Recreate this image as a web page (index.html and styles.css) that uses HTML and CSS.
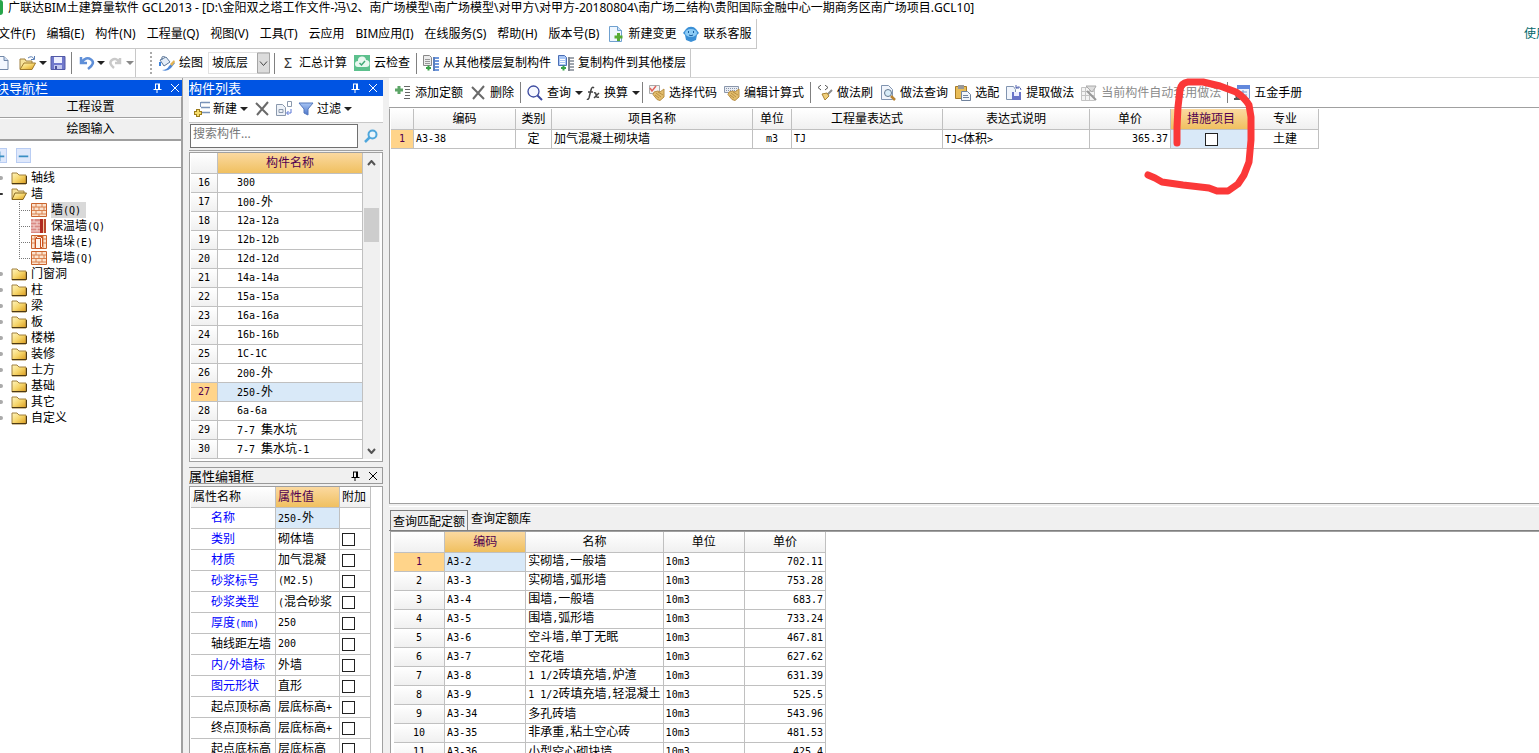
FILE: index.html
```html
<!DOCTYPE html>
<html lang="zh-CN">
<head>
<meta charset="utf-8">
<title>广联达BIM土建算量软件 GCL2013</title>
<link rel="stylesheet" href="styles.css">
</head>
<body>
<svg class="defs" aria-hidden="true">
  <defs>
    <linearGradient id="gold" x1="0" y1="0" x2="1" y2="1"><stop offset="0" stop-color="#fff6c0"/><stop offset=".5" stop-color="#f6d56a"/><stop offset="1" stop-color="#d99a1c"/></linearGradient>
    <linearGradient id="blue" x1="0" y1="0" x2="0" y2="1"><stop offset="0" stop-color="#a9c6f5"/><stop offset="1" stop-color="#4a74c9"/></linearGradient>
    <symbol id="folder" viewBox="0 0 16 14"><path d="M1 2h5l2 2h7v9H1z" fill="url(#gold)" stroke="#a08040"/><path d="M1 12.500h14.500V5" fill="none" stroke="#4d3a14"/></symbol>
    <symbol id="folder-open" viewBox="0 0 16 14"><path d="M1 12V2h5l1 2h6v2" fill="#f7e29a" stroke="#a08040"/><path d="M1 12.500L4 6h11.500L12 12.500z" fill="url(#gold)" stroke="#86661f"/></symbol>
    <symbol id="brick" viewBox="0 0 16 14"><path d="M.5.500h15v13H.5z" fill="#fbe3cf" stroke="#c9642e"/><path d="M1 4h14M1 7.500h14M1 11h14M5 1v3M11 1v3M3 4v3M8 4v3M13 4v3M5 7.500V11M11 7.500V11M8 11v2.500" stroke="#d9814e" fill="none"/></symbol>
    <symbol id="brick-red" viewBox="0 0 16 14"><path d="M0 0h9v14H0z" fill="#d98a84"/><path d="M0 3h9M0 6h9M0 9h9M0 12h9M3 0v3M6 3v3M3 6v3M6 9v3" stroke="#f5d6d2"/><path d="M9 0h3v14H9z" fill="#b02a20"/><path d="M12.500 0v14" stroke="#f4c8a0"/><path d="M13 0h2v14h-2z" fill="#b9462b"/></symbol>
    <symbol id="brick-pier" viewBox="0 0 16 14"><path d="M.5.500h15v13H.5z" fill="#fbe3cf" stroke="#c9642e"/><path d="M1 4h14M1 8h14M4 1v12M12 1v12" stroke="#d9814e"/><path d="M4.500 3.500l2-2h5v10l-2 2h-5zM9.500 3.500v10M4.500 3.500h5l2-2" fill="#fff4ea" stroke="#c9501e"/></symbol>
    <symbol id="pin" viewBox="0 0 10 10"><path d="M3 1h5M3.500 1v5M6.500 1v5M7.500 1v5M1.500 6.500h8M5 7v3" fill="none" stroke="currentColor"/></symbol>
    <symbol id="close" viewBox="0 0 10 10"><path d="M1 1l8 8M9 1l-8 8" fill="none" stroke="currentColor"/></symbol>
    <symbol id="cross" viewBox="0 0 16 16"><path d="M2 2l12 12M14 1L3 14" stroke="#6a6a6a" stroke-width="2" fill="none"/></symbol>
    <symbol id="doc" viewBox="0 0 16 16"><path d="M2 1.500h8l4 4v9H2z" fill="#f4f8ff" stroke="#7388a8"/><path d="M10 1.500v4h4" fill="#cddcf2" stroke="#7388a8"/></symbol>
    <symbol id="copy" viewBox="0 0 16 16"><path d="M.5.500h6l2 2v8h-8z" fill="#ececec" stroke="#888"/><path d="M2 4.500h5M2 6.500h5M2 8.500h5" stroke="#999"/><path d="M12 3h4M12 6h4M12 9h4M12 12h4M12 15h4" stroke="#6f98dc" stroke-width="2"/><path d="M11 2v14" stroke="#5b7fbd" stroke-width="2"/><path d="M5.500 10.500v5M3 13h5" stroke="#39a348" stroke-width="2"/></symbol>
    <symbol id="copy2" viewBox="0 0 16 16"><path d="M.5.500h6l2 2v8h-8z" fill="#a9c6f5" stroke="#4a6eb5"/><path d="M2 4.500h5M2 6.500h5M2 8.500h5" stroke="#fff"/><path d="M12 3h4M12 6h4M12 9h4M12 12h4M12 15h4" stroke="#a0a6ae" stroke-width="2"/><path d="M11 2v14" stroke="#7f868f" stroke-width="2"/><path d="M5.500 10.500v5M3 13h5" stroke="#39a348" stroke-width="2"/></symbol>
    <symbol id="hand" viewBox="0 0 16 16"><path d="M5 7l4-1 2 1 4-3v8l-4 3.500-3-1-4-5z" fill="#e2bd6c" stroke="#b98f45"/><path d="M7 8l5 4M9 7l5 3M6 10l4 3" stroke="#a87b31" stroke-width=".7"/></symbol>
  </defs>
</svg>

<header class="titlebar">
  <span class="app-mark"></span>
  <h1>广联达BIM土建算量软件 GCL2013 - [D:\金阳双之塔工作文件-冯\2、南广场模型\南广场模型\对甲方\对甲方-20180804\南广场二结构\贵阳国际金融中心一期商务区南广场项目.GCL10]</h1>
</header>

<div class="menu-row">
  <nav class="menubar">
    <button>文件(F)</button><button>编辑(E)</button><button>构件(N)</button><button>工程量(Q)</button><button>视图(V)</button><button>工具(T)</button><button>云应用</button><button>BIM应用(I)</button><button>在线服务(S)</button><button>帮助(H)</button><button>版本号(B)</button>
    <button><svg class="ic" viewBox="0 0 16 16"><path d="M1.500.500h8l4 4v11h-12z" fill="#eef6ff" stroke="#6fa0cf"/><path d="M9.500.500v4h4" fill="#c9def4" stroke="#6fa0cf"/><path d="M10.500 7v8M6.500 11h8" stroke="#55ab35" stroke-width="3"/></svg>新建变更</button>
    <button><svg class="ic" viewBox="0 0 16 16"><path d="M3 3a6 5 0 0 1 10 0l3 4-2 2-1 5-5 2-5-2-1-5-2-2z" fill="#3a8fd6"/><ellipse cx="8" cy="7" rx="6" ry="4" fill="#8ccbf5"/><path d="M5.500 5v2M10.500 5v2M6 9q2 1.500 4 0" stroke="#165c9d" fill="none"/></svg>联系客服</button>
  </nav>
  <a class="help-link" href="#">使用</a>
</div>

<div class="toolbars">
  <div class="bar bar-file">
    <button class="clip" aria-label="新建"><svg class="ic"><use href="#doc"/></svg></button>
    <button aria-label="打开"><svg class="ic wide" viewBox="0 0 18 16"><path d="M1 14V4h5l1 2h6v2" fill="#f7e29a" stroke="#a08040"/><path d="M1 14.500L5 8h11.500L13 14.500z" fill="url(#gold)" stroke="#a07a2c"/><path d="M9 3q4-3 6 1M15.500 1v3.500H12" fill="none" stroke="#5c7fb4"/></svg><i class="caret"></i></button>
    <button aria-label="保存"><svg class="ic" viewBox="0 0 16 16"><path d="M1 1.500h14v13H1z" fill="#7078cc" stroke="#5259a5"/><path d="M4 2h8v6H4z" fill="#eef0ff"/><path d="M4 10h8v4H4z" fill="#c3c8ee"/><path d="M5 11h2v3H5z" fill="#4a4f9b"/></svg></button>
    <span class="sep"></span>
    <button aria-label="撤销"><svg class="ic" viewBox="0 0 16 16"><path d="M2 2v6h6M2.500 7.500Q7 1 12 4.500T9 14" fill="none" stroke="#5f8fd8" stroke-width="2.500"/></svg><i class="caret"></i></button>
    <button aria-label="重做"><svg class="ic" viewBox="0 0 16 16"><path d="M12 3v5H7M11.500 7.500Q8 2 4 5t2 8" fill="none" stroke="#c9c9c9" stroke-width="2.500"/></svg><i class="caret dim"></i></button>
  </div>
  <div class="bar bar-draw">
    <span class="grip"></span>
    <button><svg class="ic" viewBox="0 0 16 16"><path d="M1 5l6-3 4 5-6 4z" fill="#e4edf8" stroke="#5b7699"/><path d="M3 5Q2 0 6 2" fill="none" stroke="#5b7699"/><path d="M1 7v4" stroke="#3b82dd" stroke-width="2"/><path d="M3 15q5 0 7-4l4-4 2 1-4 5q-4 4-9 2z" fill="#4c86d8"/><path d="M11 9l4-4 1 2-3 4z" fill="#e4b453"/></svg>绘图</button>
    <span class="combo"><select aria-label="楼层"><option>坡底层</option></select><svg viewBox="0 0 13 21"><path d="M.5.500h12v20H.5z" fill="#dcdcdc" stroke="#a5a5a5"/><path d="M3 9l3.500 4L10 9" fill="none" stroke="#444"/></svg></span>
    <span class="sep"></span>
    <button><span class="sigma">Σ</span>汇总计算</button>
    <button><svg class="ic" viewBox="0 0 16 16"><path d="M0 0h16v16H0z" fill="#5cc08d"/><path d="M4 12a3 3 0 0 1 0-6 4 4 0 0 1 8-1 3.500 3.500 0 0 1 0 7z" fill="#e9f8f0"/><path d="M5.500 8l2 2 3.500-4" fill="none" stroke="#40a876" stroke-width="1.500"/></svg>云检查</button>
    <span class="sep"></span>
    <button><svg class="ic"><use href="#copy"/></svg>从其他楼层复制构件</button>
    <button><svg class="ic"><use href="#copy2"/></svg>复制构件到其他楼层</button>
  </div>
</div>

<main class="workspace">
  <aside class="nav-panel">
    <div class="cap active"><h2 class="cut">块导航栏</h2><button aria-label="固定"><svg><use href="#pin"/></svg></button><button aria-label="关闭"><svg><use href="#close"/></svg></button></div>
    <button class="stage">工程设置</button>
    <button class="stage">绘图输入</button>
    <div class="tree-tools"><button class="sq plus" aria-label="展开"><svg viewBox="0 0 15 15"><path d="M2 8.500h11M7.500 3v11" stroke="#3a8fc4" stroke-width="2"/></svg></button><button class="sq" aria-label="折叠"><svg viewBox="0 0 15 15"><path d="M2 8.500h11" stroke="#3a8fc4" stroke-width="2"/></svg></button></div>
    <ul class="tree">
      <li><div class="node"><svg><use href="#folder"/></svg>轴线</div></li>
      <li class="opened"><div class="node open"><svg><use href="#folder-open"/></svg>墙</div>
        <ul>
          <li><div class="leaf sel"><svg><use href="#brick"/></svg><span>墙<b class="m">(Q)</b></span></div></li>
          <li><div class="leaf"><svg><use href="#brick-red"/></svg><span>保温墙<b class="m">(Q)</b></span></div></li>
          <li><div class="leaf"><svg><use href="#brick-pier"/></svg><span>墙垛<b class="m">(E)</b></span></div></li>
          <li><div class="leaf"><svg><use href="#brick"/></svg><span>幕墙<b class="m">(Q)</b></span></div></li>
        </ul>
      </li>
      <li><div class="node"><svg><use href="#folder"/></svg>门窗洞</div></li>
      <li><div class="node"><svg><use href="#folder"/></svg>柱</div></li>
      <li><div class="node"><svg><use href="#folder"/></svg>梁</div></li>
      <li><div class="node"><svg><use href="#folder"/></svg>板</div></li>
      <li><div class="node"><svg><use href="#folder"/></svg>楼梯</div></li>
      <li><div class="node"><svg><use href="#folder"/></svg>装修</div></li>
      <li><div class="node"><svg><use href="#folder"/></svg>土方</div></li>
      <li><div class="node"><svg><use href="#folder"/></svg>基础</div></li>
      <li><div class="node"><svg><use href="#folder"/></svg>其它</div></li>
      <li><div class="node"><svg><use href="#folder"/></svg>自定义</div></li>
    </ul>
  </aside>

  <section class="mid">
    <div class="cap active"><h2>构件列表</h2><button aria-label="固定"><svg><use href="#pin"/></svg></button><button aria-label="关闭"><svg><use href="#close"/></svg></button></div>
    <div class="list-tools">
      <button><svg class="ic" viewBox="0 0 16 16"><path d="M7 1.500h9M7 6.500h9M7 11.500h9" stroke="#7a93b8" stroke-width="1.500"/><path d="M6.500 1v5" stroke="#7a93b8"/><path d="M4 8v8M0 12h8" stroke="#9c7c1b" stroke-width="4"/><path d="M4 9v6M1 12h6" stroke="#f6dc6a" stroke-width="2"/></svg>新建<i class="caret"></i></button>
      <button aria-label="删除"><svg class="ic"><use href="#cross"/></svg></button>
      <button aria-label="复制"><svg class="ic" viewBox="0 0 16 16"><path d="M.5 3.500h6l3 3v8h-9z" fill="#eef2f8" stroke="#8b99ad"/><path d="M3 8.500h4v3H3z" fill="none" stroke="#8b99ad"/><path d="M11.500.500h4v5h-4z" fill="#fff" stroke="#8b99ad"/><path d="M15 8v4h-4M12.500 10l-2 2 2 2" fill="none" stroke="#5b76d6"/></svg></button>
      <button><svg class="ic" viewBox="0 0 16 16"><path d="M1 2h14L10 8v6l-4-2V8z" fill="url(#blue)" stroke="#5578bd"/></svg>过滤<i class="caret"></i></button>
    </div>
    <div class="search"><input type="text" placeholder="搜索构件..." aria-label="搜索构件"><button aria-label="搜索"><svg viewBox="0 0 14 14"><circle cx="8.500" cy="5.500" r="4" fill="#eaf6fd" stroke="#4fa7dc" stroke-width="2"/><path d="M5.500 8.500L1 13" stroke="#4fa7dc" stroke-width="2.500"/></svg></button></div>
    <div class="list-box">
      <table class="grid comps">
        <colgroup><col class="c-no"><col></colgroup>
        <thead><tr><th></th><th class="hot">构件名称</th></tr></thead>
        <tbody>
          <tr><th class="m">16</th><td class="m">300</td></tr>
          <tr><th class="m">17</th><td><b class="m">100-</b>外</td></tr>
          <tr><th class="m">18</th><td class="m">12a-12a</td></tr>
          <tr><th class="m">19</th><td class="m">12b-12b</td></tr>
          <tr><th class="m">20</th><td class="m">12d-12d</td></tr>
          <tr><th class="m">21</th><td class="m">14a-14a</td></tr>
          <tr><th class="m">22</th><td class="m">15a-15a</td></tr>
          <tr><th class="m">23</th><td class="m">16a-16a</td></tr>
          <tr><th class="m">24</th><td class="m">16b-16b</td></tr>
          <tr><th class="m">25</th><td class="m">1C-1C</td></tr>
          <tr><th class="m">26</th><td><b class="m">200-</b>外</td></tr>
          <tr><th class="m now">27</th><td class="pick"><b class="m">250-</b>外</td></tr>
          <tr><th class="m">28</th><td class="m">6a-6a</td></tr>
          <tr><th class="m">29</th><td><b class="m">7-7 </b>集水坑</td></tr>
          <tr><th class="m">30</th><td><b class="m">7-7 </b>集水坑<b class="m">-1</b></td></tr>
        </tbody>
      </table>
      <div class="scroll"><svg viewBox="0 0 9 6"><path d="M1 5l3.500-4L8 5" fill="none" stroke="#555" stroke-width="2"/></svg><span class="thumb"></span><svg viewBox="0 0 9 6"><path d="M1 1l3.500 4L8 1" fill="none" stroke="#555" stroke-width="2"/></svg></div>
    </div>
    <div class="cap idle"><h2>属性编辑框</h2><button aria-label="固定"><svg><use href="#pin"/></svg></button><button aria-label="关闭"><svg><use href="#close"/></svg></button></div>
    <div class="prop-box">
      <table class="grid props">
        <colgroup><col class="p-name"><col class="p-val"><col class="p-add"></colgroup>
        <thead><tr><th>属性名称</th><th class="hot">属性值</th><th>附加</th></tr></thead>
        <tbody>
          <tr><td class="key">名称</td><td class="pick"><b class="m">250-</b>外</td><td></td></tr>
          <tr><td class="key">类别</td><td>砌体墙</td><td><input type="checkbox" aria-label="类别"></td></tr>
          <tr><td class="key">材质</td><td>加气混凝</td><td><input type="checkbox" aria-label="材质"></td></tr>
          <tr><td class="key">砂浆标号</td><td class="m">(M2.5)</td><td><input type="checkbox" aria-label="砂浆标号"></td></tr>
          <tr><td class="key">砂浆类型</td><td><b class="m">(</b>混合砂浆</td><td><input type="checkbox" aria-label="砂浆类型"></td></tr>
          <tr><td class="key">厚度<b class="m">(mm)</b></td><td class="m">250</td><td><input type="checkbox" aria-label="厚度"></td></tr>
          <tr><td class="key own">轴线距左墙</td><td class="m">200</td><td><input type="checkbox" aria-label="轴线距左墙"></td></tr>
          <tr><td class="key">内<b class="m">/</b>外墙标</td><td>外墙</td><td><input type="checkbox" aria-label="内外墙标"></td></tr>
          <tr><td class="key">图元形状</td><td>直形</td><td><input type="checkbox" aria-label="图元形状"></td></tr>
          <tr><td class="key own">起点顶标高</td><td>层底标高<b class="m">+</b></td><td><input type="checkbox" aria-label="起点顶标高"></td></tr>
          <tr><td class="key own">终点顶标高</td><td>层底标高<b class="m">+</b></td><td><input type="checkbox" aria-label="终点顶标高"></td></tr>
          <tr><td class="key own">起点底标高</td><td>层底标高</td><td><input type="checkbox" aria-label="起点底标高"></td></tr>
        </tbody>
      </table>
    </div>
  </section>

  <section class="right">
    <div class="work-tools">
      <button><svg class="ic" viewBox="0 0 16 16"><path d="M4 1v8M0 5h8" stroke="#5da567" stroke-width="3"/><path d="M9 1.500h6M10 4.500h5M10 7.500h5M10 10.500h5M9 13.500h6" stroke="#666"/></svg>添加定额</button>
      <button><svg class="ic"><use href="#cross"/></svg>删除</button>
      <span class="sep"></span>
      <button class="drop"><svg class="ic" viewBox="0 0 16 16"><circle cx="6.500" cy="6.500" r="5.500" fill="#f6f8ff" stroke="#3c4aa0" stroke-width="1.300"/><path d="M10.500 10.500l4.500 4.500" stroke="#3c4aa0" stroke-width="2"/></svg>查询<i class="caret"></i></button>
      <button class="drop"><svg class="ic fx" viewBox="0 0 14 16"><path d="M8 3Q6 1 5 5L3 13q-1 2-2 1M2 7h5M8 8q2-1 2 2t3 2M13 8l-5 5" fill="none" stroke="#444" stroke-width="1.500"/></svg>换算<i class="caret"></i></button>
      <span class="sep"></span>
      <button><svg class="ic" viewBox="0 0 16 16"><path d="M.5.500h10v8H.5z" fill="#f4f4f4" stroke="#aaa"/><path d="M1 3l2 3 4-5" fill="none" stroke="#e0645c" stroke-width="1.500"/><use href="#hand"/></svg>选择代码</button>
      <button><svg class="ic" viewBox="0 0 16 16"><path d="M.5 1.500h14v6H.5z" fill="#e9edf4" stroke="#8a96ab"/><path d="M2 3.500h11M2 5.500h11" stroke="#8a96ab" stroke-dasharray="1 1"/><use href="#hand"/></svg>编辑计算式</button>
      <span class="sep"></span>
      <button><svg class="ic" viewBox="0 0 16 16"><path d="M4 0L1 2.500 4 5M8 0l3 2.500L8 5" fill="none" stroke="#555"/><path d="M15 5l-5 5" stroke="#8b8b8b" stroke-width="2"/><path d="M5 9l5-1 2 3-4 4z" fill="#f0cf7b" stroke="#a98232"/></svg>做法刷</button>
      <button><svg class="ic" viewBox="0 0 16 16"><path d="M1.500.500h7l4 4v10h-11z" fill="#f1f5fc" stroke="#8194b0"/><circle cx="8" cy="8" r="3.500" fill="#d8ecf8" stroke="#61788f"/><path d="M11 11l4 4" stroke="#b98331" stroke-width="2.500"/></svg>做法查询</button>
      <button><svg class="ic" viewBox="0 0 16 16"><path d="M.5 1.500h11v12H.5z" fill="#e9bd58" stroke="#a77b27"/><path d="M3 0h6v4H3z" fill="#999"/><path d="M6.500 6.500h6l3 3v6h-9z" fill="#f2f6fc" stroke="#70829c"/><path d="M8 10.500h5M8 12.500h6" stroke="#70829c"/></svg>选配</button>
      <button><svg class="ic" viewBox="0 0 16 16"><path d="M.5 1.500h7l2 3v10h-9z" fill="#f1f5fc" stroke="#8194b0"/><path d="M6 7h9v8H6z" fill="#6a74c8"/><path d="M8 7h5v4H8z" fill="#eef"/><path d="M10 3q4-3 5 2M10 0v3h3" fill="none" stroke="#4c5fae"/></svg>提取做法</button>
      <button disabled><svg class="ic" viewBox="0 0 16 16"><path d="M.5 2.500h13v13H.5zM.5 6.500h13M.5 10.500h13M4.500 2.500v13M8.500 2.500v13" fill="#f4f4f4" stroke="#c4c4c4"/><path d="M5 1h10l-1 2-3 4z" fill="#ddd" stroke="#aaa"/><path d="M6 6l9 9" stroke="#999" stroke-width="2"/></svg>当前构件自动套用做法</button>
      <span class="sep"></span>
      <button><svg class="ic" viewBox="0 0 16 16"><path d="M3.500 1.500h12v12h-12z" fill="#eef3fd" stroke="#7d97cc"/><path d="M3 0h13v4H3z" fill="#6288dc"/><path d="M6 7h7M6 10h7M9 5v8" stroke="#7d97cc"/><path d="M0 14h6M2.500 9v5" stroke="#555" stroke-width="2"/></svg>五金手册</button>
    </div>
    <div class="quota-box">
      <table class="grid quota">
        <colgroup><col class="q1"><col class="q2"><col class="q3"><col class="q4"><col class="q5"><col class="q6"><col class="q7"><col class="q8"><col class="q8"><col class="q9"></colgroup>
        <thead><tr><th></th><th>编码</th><th>类别</th><th>项目名称</th><th>单位</th><th>工程量表达式</th><th>表达式说明</th><th>单价</th><th class="hot">措施项目</th><th>专业</th></tr></thead>
        <tbody><tr><th class="m now">1</th><td class="m">A3-38</td><td class="mid-t">定</td><td>加气混凝土砌块墙</td><td class="m mid-t">m3</td><td class="m">TJ</td><td><b class="m">TJ&lt;</b>体积<b class="m">&gt;</b></td><td class="m num">365.37</td><td class="pick mid-t"><input type="checkbox" aria-label="措施项目"></td><td class="mid-t">土建</td></tr></tbody>
      </table>
    </div>
    <div class="tabs"><button class="on">查询匹配定额</button><button>查询定额库</button></div>
    <div class="match-box">
      <table class="grid match">
        <colgroup><col class="m1"><col class="m2"><col class="m3"><col class="m2"><col class="m2"></colgroup>
        <thead><tr><th></th><th class="hot">编码</th><th>名称</th><th>单位</th><th>单价</th></tr></thead>
        <tbody>
          <tr><th class="m now">1</th><td class="m pick">A3-2</td><td>实砌墙<b class="m">,</b>一般墙</td><td class="m">10m3</td><td class="m num">702.11</td></tr>
          <tr><th class="m">2</th><td class="m">A3-3</td><td>实砌墙<b class="m">,</b>弧形墙</td><td class="m">10m3</td><td class="m num">753.28</td></tr>
          <tr><th class="m">3</th><td class="m">A3-4</td><td>围墙<b class="m">,</b>一般墙</td><td class="m">10m3</td><td class="m num">683.7</td></tr>
          <tr><th class="m">4</th><td class="m">A3-5</td><td>围墙<b class="m">,</b>弧形墙</td><td class="m">10m3</td><td class="m num">733.24</td></tr>
          <tr><th class="m">5</th><td class="m">A3-6</td><td>空斗墙<b class="m">,</b>单丁无眠</td><td class="m">10m3</td><td class="m num">467.81</td></tr>
          <tr><th class="m">6</th><td class="m">A3-7</td><td>空花墙</td><td class="m">10m3</td><td class="m num">627.62</td></tr>
          <tr><th class="m">7</th><td class="m">A3-8</td><td><b class="m">1 1/2</b>砖填充墙<b class="m">,</b>炉渣</td><td class="m">10m3</td><td class="m num">631.39</td></tr>
          <tr><th class="m">8</th><td class="m">A3-9</td><td><b class="m">1 1/2</b>砖填充墙<b class="m">,</b>轻混凝土</td><td class="m">10m3</td><td class="m num">525.5</td></tr>
          <tr><th class="m">9</th><td class="m">A3-34</td><td>多孔砖墙</td><td class="m">10m3</td><td class="m num">543.96</td></tr>
          <tr><th class="m">10</th><td class="m">A3-35</td><td>非承重<b class="m">,</b>粘土空心砖</td><td class="m">10m3</td><td class="m num">481.53</td></tr>
          <tr><th class="m">11</th><td class="m">A3-36</td><td>小型空心砌块墙</td><td class="m">10m3</td><td class="m num">425.4</td></tr>
        </tbody>
      </table>
    </div>
    <svg class="ink" viewBox="1140 74 120 124" aria-hidden="true"><path d="M1177 143L1177 127 1178 107 1180 90Q1181 83 1188 82L1203 82 1220 86 1236 92Q1245 98 1249 105L1251 117 1251 140 1249 162 1244 175 1238 184 1228 191 1217 191 1209 188 1183 185 1162 182 1155 178 1148 175" fill="none" stroke="#fb3838" stroke-width="7" stroke-linecap="round" stroke-linejoin="round"/></svg>
  </section>
</main>
</body>
</html>
```
FILE: styles.css
```css
* { box-sizing: border-box; }
body {
  margin: 0;
  height: 100vh;
  overflow: hidden;
  display: flex;
  flex-direction: column;
  background: #fff;
  color: #000;
  font: 12px/16px "Noto Sans", "Noto Sans CJK SC", sans-serif;
}
button {
  display: flex;
  align-items: center;
  gap: 4px;
  flex: none;
  margin: 0;
  padding: 0;
  border: 0;
  background: none;
  color: inherit;
  font: inherit;
  white-space: nowrap;
}
svg { display: block; flex: none; }
.defs { position: absolute; width: 0; height: 0; }
.ic { width: 16px; height: 16px; }
.ic.wide { width: 18px; }
.ic.fx { width: 14px; }
.caret {
  border: 4px solid transparent;
  border-top-color: #222;
  border-bottom: 0;
}
.caret.dim { border-top-color: #888; }
.sep { flex: none; width: 1px; height: 21px; background: #808080; }
.m { font-family: "DejaVu Sans Mono", "Liberation Mono", monospace; font-size: 10px; font-weight: 400; }

/* title and menus */
.titlebar { display: flex; flex: none; height: 19px; }
.app-mark { width: 3px; height: 15px; margin-right: 5px; background: #27a54a; border-radius: 0 3px 3px 0; }
h1, h2 { margin: 0; font: inherit; white-space: nowrap; }
.menu-row { display: flex; flex: none; justify-content: space-between; height: 30px; }
.menubar {
  display: flex;
  align-items: center;
  gap: 11px;
  margin-left: -2px;
  padding-right: 5px;
  border: solid #c8c8c8;
  border-width: 0 1px 1px 0;
}
.menubar button:nth-last-child(2) { margin: 0 -4px 0 -2px; }
.help-link { align-self: center; margin-right: -9px; color: #00696b; text-decoration: none; white-space: nowrap; }
.toolbars { display: flex; flex: none; height: 29px; border-bottom: 1px solid #d4d4d4; }
.bar { display: flex; align-items: center; border-right: 1px solid #c8c8c8; }
.bar-file { gap: 3px; padding-right: 1px; }
.bar-file button { gap: 2px; }
.bar-file .clip { margin: 0 6px 0 -6px; }
.bar-file .sep { margin: 0 4px 0 2px; height: 22px; }
.bar-draw { gap: 7px; margin-left: 14px; padding-right: 4px; }
.bar-draw .sep { margin: 0 -1px; }
.grip { width: 2px; height: 22px; border-left: 2px dotted #aaa; }
.combo { position: relative; margin: 0 -2px; }
.combo select {
  width: 62px;
  height: 22px;
  padding: 0 3px;
  border: 1px solid #e2e2e2;
  background: #fff;
  appearance: none;
  font: inherit;
  color: #000;
}
.combo svg { position: absolute; top: 0; right: 0; width: 13px; height: 22px; pointer-events: none; }
.sigma { width: 14px; color: #333; font-size: 14px; text-align: center; }

/* panels */
.workspace { display: flex; flex: 1; min-height: 0; gap: 6px; background: #f0f0f0; }
.nav-panel, .mid, .right { display: flex; flex-direction: column; min-height: 0; }
.nav-panel { flex: none; width: 183px; padding-top: 2px; border-right: 1px solid #a0a0a0; }
.mid { flex: none; width: 194px; padding-top: 2px; }
.right { position: relative; flex: 1; min-width: 0; }
.cap { display: flex; align-items: center; flex: none; height: 16px; padding-right: 5px; gap: 8px; font-size: 13px; }
.cap h2 { flex: 1; }
.cap svg { width: 10px; height: 10px; }
.nav-panel .cap { padding-right: 2px; }
.cap .cut { margin-left: -4px; }
.active { background: #0054e3; color: #fff; }
.idle { height: 17px; margin-top: 5px; padding-right: 4px; border: 1px solid #999; border-left: 0; }
.stage { justify-content: center; height: 22px; border: 1px solid #a0a0a0; border-left: 0; border-top-color: #fff; background: #f0f0f0; }
.tree-tools { display: flex; flex: none; gap: 9px; height: 28px; padding-top: 7px; background: #fff; border: 1px solid #a0a0a0; border-left: 0; }
.sq { width: 15px; height: 15px; background: #dfe8fb; border: 1px solid #b9cdf3; }
.sq svg { width: 13px; height: 13px; }
.sq.plus { margin-left: -8px; }
.tree { flex: 1; margin: 0; padding: 2px 0 0; list-style: none; background: #fff; overflow: hidden; border-right: 1px solid #a0a0a0; }
.tree ul { margin: 0 0 0 19px; padding: 0; list-style: none; }
.tree ul li { background: linear-gradient(#777 50%, transparent 50%) 0 0 / 1px 2px repeat-y; }
.tree ul li:last-child { background-repeat: no-repeat; background-size: 1px 8px; background-image: repeating-linear-gradient(#777 0 1px, transparent 1px 2px); }
.node, .leaf { display: flex; align-items: center; height: 16px; gap: 4px; }
.node::before { content: ""; flex: none; width: 3px; height: 4px; background: #aaa; border-radius: 0 2px 2px 0; }
.node.open::before { height: 2px; background: #333; }
.node svg, .leaf svg { width: 16px; height: 14px; }
.node svg { margin-left: 4px; }
.leaf::before { content: ""; width: 11px; margin-right: -3px; border-top: 1px dotted #777; }
.leaf span { height: 16px; padding-right: 5px; }
.leaf.sel span { background: #d9d9d9; }

.list-tools { display: flex; align-items: center; flex: none; gap: 6px; height: 27px; padding-left: 5px; background: #fff; border-bottom: 1px solid #c8c8c8; }
.list-tools button { gap: 3px; }
.search { display: flex; flex: none; height: 28px; padding: 1px 0 2px 1px; border-bottom: 1px solid #a0a0a0; }
.search input { flex: 1; min-width: 0; padding: 0 2px 4px; border: 1px solid #707070; background: #fff; font: inherit; }
.search input::placeholder { color: #777; opacity: 1; }
.search button { justify-content: center; width: 25px; }
.search svg { width: 14px; height: 14px; }
.list-box, .prop-box, .quota-box, .match-box { background: #fff; border: 1px solid #a0a0a0; }
.list-box { display: flex; flex: none; margin-top: 1px; padding: 0 2px 2px 1px; }
.list-box .comps { flex: 1; }
.scroll { display: flex; flex-direction: column; align-items: center; width: 17px; padding: 7px 0 5px; background: #f0f0f0; }
.scroll svg { width: 9px; height: 6px; }
.thumb { width: 15px; height: 34px; margin: 42px 0 auto; background: #cdcdcd; }
.prop-box { flex: 1; min-height: 0; overflow: hidden; margin-top: 2px; padding-left: 1px; border-width: 1px 1px 0; }

/* grids */
.grid { border-collapse: separate; border-spacing: 0; table-layout: fixed; line-height: 16px; }
.grid th, .grid td { height: 19px; padding: 0 2px; border: solid #c0c0c0; border-width: 0 1px 1px 0; font-weight: 400; text-align: left; white-space: nowrap; overflow: hidden; }
.grid th { background: linear-gradient(#fff, #f0f0f0); text-align: center; }
.grid thead th { height: 21px; }
.grid .hot { background: linear-gradient(#fbd9a0, #f0c060); color: #500050; }
.grid .now { background: #ffd48a; color: #500050; }
.grid .pick { background: #d9e9f8; }
.grid .mid-t { text-align: center; }
.grid .num { text-align: right; }
.grid input { display: block; width: 13px; height: 13px; margin: 0; appearance: none; background: #fff; border: 1px solid #222; }
.grid .mid-t input { margin: 0 auto; }
.c-no { width: 27px; }
.grid.comps td { padding-left: 19px; }
.grid.props th, .grid.props td { height: 21px; }
.grid.props th { text-align: left; }
.grid.props .key { padding: 0 0 0 20px; color: #00f; }
.grid.props .own { color: #000; }
.props { width: 180px; }
.p-name { width: 85px; }
.p-val { width: 64px; }
.p-add { width: 31px; }

.work-tools { display: flex; align-items: center; flex: none; gap: 7px; height: 30px; padding-left: 6px; background: #fff; border-bottom: 1px solid #a0a0a0; }
.work-tools .sep { margin: 0 -1px; }
.work-tools .drop { margin-right: -4px; }
.work-tools button:disabled { color: #8a8a8a; }
.quota-box { flex: 16 1 0; min-height: 0; border-top-color: #fff; padding-left: 1px; border-width: 1px 0 1px 1px; }
.quota { width: 927px; }
.q1 { width: 23px; } .q2 { width: 102px; } .q3 { width: 36px; } .q4 { width: 201px; } .q5 { width: 39px; }
.q6 { width: 151px; } .q7 { width: 147px; } .q8 { width: 81px; } .q9 { width: 67px; }
.tabs { display: flex; flex: none; height: 25px; margin-top: 2px; padding: 3px 0 0 1px; border-top: 1px solid #fff; border-bottom: 1px solid #808080; }
.tabs button { padding: 0 3px 2px; }
.tabs .on { padding: 3px 2px 0; border: 1px solid #808080; border-bottom: 0; }
.match-box { flex: 9 1 0; min-height: 0; overflow: hidden; margin-left: 1px; padding-left: 3px; border-width: 1px 0 0 1px; }
.match { width: 432px; }
.m1 { width: 51px; } .m2 { width: 81px; } .m3 { width: 137px; }
.ink { position: absolute; top: -4px; left: 751px; width: 120px; height: 124px; pointer-events: none; }
```
